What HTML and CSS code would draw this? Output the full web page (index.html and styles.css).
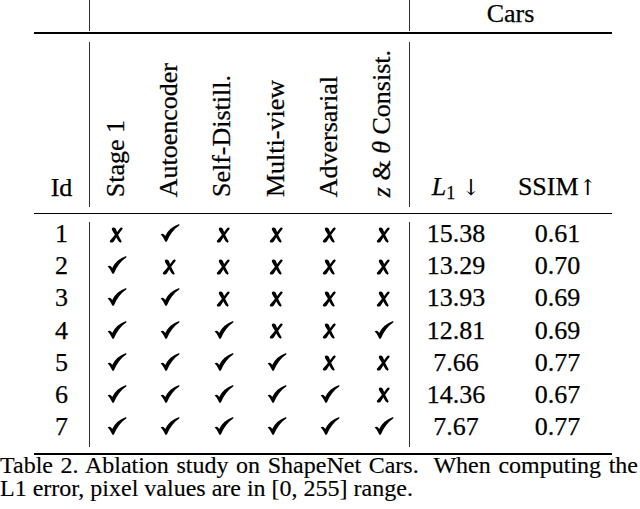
FILE: index.html
```html
<!DOCTYPE html>
<html>
<head>
<meta charset="utf-8">
<link rel="stylesheet" href="styles.css">
</head>
<body>
<svg class="defs" width="0" height="0" aria-hidden="true">
  <defs>
    <symbol id="ck" viewBox="0 0 20 18">
      <path d="M0.6,10.5 C2.2,9.2 3.8,9.5 5.2,12 C8,6.4 12.4,2.4 18.6,0.3 C19.4,0.1 19.8,0.9 19.2,1.4 C13.8,5 9.8,10.4 7,17.2 C6.6,18 5.5,18 5.1,17.3 C3.9,14.5 2.5,12.1 0.6,10.5 Z"/>
    </symbol>
    <symbol id="cx" viewBox="0 0 14 16">
      <path d="M4.3,0.5 C5.9,0.4 6.6,1.4 7.1,2.6 C8.3,5.8 9.9,10 12.4,13.9 C12.9,14.8 12.2,15.7 11.2,15.4 C10.2,15.1 9.5,14.2 8.9,13.2 C7.3,10.2 5.2,6.4 3,2.9 C2.4,1.8 3.1,0.6 4.3,0.5 Z"/>
      <path d="M12.4,0.5 C13.5,0.4 14,1.4 13.4,2.3 C10.5,5.8 7.5,10 5,14.2 C4.3,15.3 2.9,15.8 1.6,15.4 C0.6,15.1 0.6,14 1.3,13.2 C4.5,9.6 7.9,5.3 10.8,1.5 C11.3,0.9 11.8,0.6 12.4,0.5 Z"/>
    </symbol>
  </defs>
</svg>
<div class="fig">
  <div class="tbl">
    <div class="sec top">
      <div class="cars">Cars</div>
    </div>
    <div class="sec head">
      <div class="cell">Id</div>
      <div class="cell rc"><span class="rot">Stage 1</span></div>
      <div class="cell rc"><span class="rot">Autoencoder</span></div>
      <div class="cell rc"><span class="rot">Self-Distill.</span></div>
      <div class="cell rc"><span class="rot">Multi-view</span></div>
      <div class="cell rc"><span class="rot">Adversarial</span></div>
      <div class="cell rc"><span class="rot"><i>z</i> &amp; <i>θ</i> Consist.</span></div>
      <div class="cell"><i>L</i><sub>1</sub> <span class="ar">↓</span></div>
      <div class="cell">SSIM<span class="ar">↑</span></div>
    </div>
    <div class="sec body">
      <div>1</div><div><svg class="x"><use href="#cx"/></svg></div><div><svg class="c"><use href="#ck"/></svg></div><div><svg class="x"><use href="#cx"/></svg></div><div><svg class="x"><use href="#cx"/></svg></div><div><svg class="x"><use href="#cx"/></svg></div><div><svg class="x"><use href="#cx"/></svg></div><div>15.38</div><div>0.61</div>
      <div>2</div><div><svg class="c"><use href="#ck"/></svg></div><div><svg class="x"><use href="#cx"/></svg></div><div><svg class="x"><use href="#cx"/></svg></div><div><svg class="x"><use href="#cx"/></svg></div><div><svg class="x"><use href="#cx"/></svg></div><div><svg class="x"><use href="#cx"/></svg></div><div>13.29</div><div>0.70</div>
      <div>3</div><div><svg class="c"><use href="#ck"/></svg></div><div><svg class="c"><use href="#ck"/></svg></div><div><svg class="x"><use href="#cx"/></svg></div><div><svg class="x"><use href="#cx"/></svg></div><div><svg class="x"><use href="#cx"/></svg></div><div><svg class="x"><use href="#cx"/></svg></div><div>13.93</div><div>0.69</div>
      <div>4</div><div><svg class="c"><use href="#ck"/></svg></div><div><svg class="c"><use href="#ck"/></svg></div><div><svg class="c"><use href="#ck"/></svg></div><div><svg class="x"><use href="#cx"/></svg></div><div><svg class="x"><use href="#cx"/></svg></div><div><svg class="c"><use href="#ck"/></svg></div><div>12.81</div><div>0.69</div>
      <div>5</div><div><svg class="c"><use href="#ck"/></svg></div><div><svg class="c"><use href="#ck"/></svg></div><div><svg class="c"><use href="#ck"/></svg></div><div><svg class="c"><use href="#ck"/></svg></div><div><svg class="x"><use href="#cx"/></svg></div><div><svg class="x"><use href="#cx"/></svg></div><div>7.66</div><div>0.77</div>
      <div>6</div><div><svg class="c"><use href="#ck"/></svg></div><div><svg class="c"><use href="#ck"/></svg></div><div><svg class="c"><use href="#ck"/></svg></div><div><svg class="c"><use href="#ck"/></svg></div><div><svg class="c"><use href="#ck"/></svg></div><div><svg class="x"><use href="#cx"/></svg></div><div>14.36</div><div>0.67</div>
      <div>7</div><div><svg class="c"><use href="#ck"/></svg></div><div><svg class="c"><use href="#ck"/></svg></div><div><svg class="c"><use href="#ck"/></svg></div><div><svg class="c"><use href="#ck"/></svg></div><div><svg class="c"><use href="#ck"/></svg></div><div><svg class="c"><use href="#ck"/></svg></div><div>7.67</div><div>0.77</div>
    </div>
  </div>
  <p class="caption">Table 2. Ablation study on ShapeNet Cars.&nbsp; When computing the L1 error, pixel values are in [0, 255] range.</p>
</div>
</body>
</html>
```

FILE: styles.css
```css
html, body {
  margin: 0;
  padding: 0;
  background: #fff;
}
body {
  width: 640px;
  height: 509px;
  overflow: hidden;
  font-family: "Liberation Serif", "Times New Roman", serif;
  color: #000;
}
.defs {
  display: block;
  width: 0;
  height: 0;
}
.tbl {
  margin-left: 34px;
  width: 578px;
  -webkit-text-stroke: 0.25px #000;
}
.sec {
  display: grid;
  grid-template-columns: 55px repeat(6, 53.333px) 94px 109px;
  font-size: 26px;
  text-align: center;
  background-image: linear-gradient(#333, #333), linear-gradient(#333, #333);
  background-repeat: no-repeat;
}
.top {
  height: 32px;
  border-bottom: 2px solid #000;
  line-height: normal;
  background-size: 1px 31px, 1px 31px;
  background-position: 55px 0, 375px 0;
}
.cars {
  grid-column: 8 / span 2;
  margin-top: -1px;
}
.head {
  height: 167px;
  padding-bottom: 12px;
  border-bottom: 1px solid #000;
  align-items: end;
  line-height: 26px;
  background-size: 1px 165px, 1px 165px;
  background-position: 55px 8px, 375px 8px;
}
.rc {
  display: flex;
  justify-content: center;
  align-items: flex-end;
}
.rot {
  writing-mode: vertical-rl;
  transform: rotate(180deg);
  white-space: nowrap;
  margin-bottom: 4px;
}
.ar {
  font-family: "DejaVu Serif", "DejaVu Sans", serif;
  font-size: 22px;
  color: #000;
  -webkit-text-stroke: 0;
}
sub {
  font-size: 0.7em;
  line-height: 0;
  vertical-align: -0.22em;
}
.body {
  padding-top: 4px;
  padding-bottom: 10px;
  border-bottom: 2px solid #000;
  grid-auto-rows: 32.2px;
  line-height: 32.2px;
  background-size: 1px 225px, 1px 225px;
  background-position: 55px 8px, 375px 8px;
}
.body svg {
  fill: #000;
  vertical-align: baseline;
}
.body svg.c {
  width: 20px;
  height: 18px;
  margin-left: 3px;
}
.body svg.x {
  width: 14px;
  height: 16px;
  margin-left: 1px;
  margin-bottom: -0.5px;
}
.caption {
  margin: -1px 0 0 0;
  width: 638px;
  font-size: 24px;
  line-height: 23px;
  text-align: justify;
  text-align-last: left;
  -webkit-text-stroke: 0.15px #000;
}
```
